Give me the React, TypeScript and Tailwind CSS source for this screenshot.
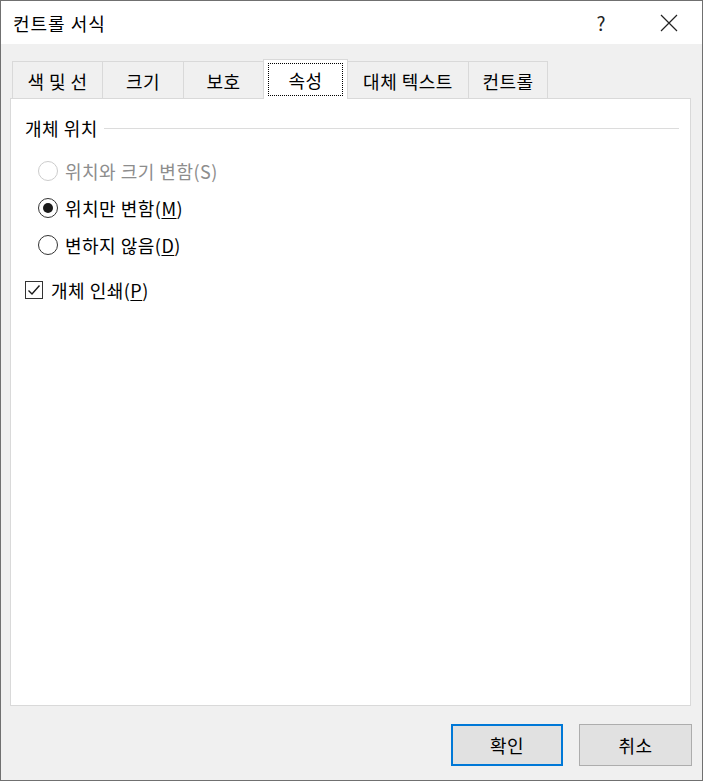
import React from "react"

const font = { fontFamily: '"Noto Sans CJK KR", "Noto Sans", sans-serif' }

const tabs = [
  { label: "색 및 선", w: "w-[91px]" },
  { label: "크기", w: "w-[82px]" },
  { label: "보호", w: "w-[81px]" },
  { label: "속성", w: "w-[85px]", active: true },
  { label: "대체 텍스트", w: "w-[122px]" },
  { label: "컨트롤", w: "w-[80px]" },
]

function Radio({ checked, disabled }: { checked?: boolean; disabled?: boolean }) {
  return (
    <span
      className={`w-[20px] h-[20px] rounded-full border flex items-center justify-center bg-white shrink-0 ${
        disabled ? "border-[#cccccc]" : "border-[#333333]"
      }`}
    >
      {checked && <span className="w-[10px] h-[10px] rounded-full bg-[#1a1a1a]" />}
    </span>
  )
}

function RadioRow({
  text,
  mn,
  checked,
  disabled,
}: {
  text: string
  mn: string
  checked?: boolean
  disabled?: boolean
}) {
  return (
    <div className={`h-[37px] flex items-center gap-[7px] pl-[13px] ${disabled ? "text-[#8d8d8d]" : "text-black"}`}>
      <Radio checked={checked} disabled={disabled} />
      <span className="text-[18px] tracking-[0.5px] leading-none whitespace-nowrap">
        {text}({disabled ? mn : <u className="underline-offset-2">{mn}</u>})
      </span>
    </div>
  )
}

export default function App() {
  return (
    <div
      style={font}
      className="w-[703px] h-[781px] border border-[#707070] bg-[#f0f0f0] flex flex-col text-black"
    >
      {/* title bar */}
      <div className="h-[43px] bg-white flex items-center shrink-0">
        <span className="pl-[12px] text-[18px] tracking-[1px] leading-none flex-1">컨트롤 서식</span>
        <span className="w-[30px] text-center text-[19px] leading-none mr-[44px] text-[#222]">?</span>
        <svg width="18" height="18" viewBox="0 0 18 18" className="mr-[24px]">
          <path d="M1 1 L17 17 M17 1 L1 17" stroke="#222" strokeWidth="1.2" fill="none" />
        </svg>
      </div>

      {/* tabs */}
      <div className="pt-[14px] px-[9px] flex flex-col flex-1">
        <div className="flex items-end pl-[2px] h-[40px]">
          {tabs.map((t) => (
            <div
              key={t.label}
              className={`${t.w} -ml-px first:ml-0 border border-b-0 border-[#d9d9d9] flex items-center justify-center text-[18px] tracking-[0.5px] leading-none ${
                t.active ? "h-[40px] bg-white relative z-10 -mb-px pb-[2px]" : "h-[37px] bg-[#f0f0f0]"
              }`}
            >
              {t.active ? (
                <span className="w-[75px] h-[33px] mt-[2px] border border-dotted border-black flex items-center justify-center">
                  {t.label}
                </span>
              ) : (
                <span className="pt-[1px]">{t.label}</span>
              )}
            </div>
          ))}
        </div>

        {/* panel */}
        <div className="w-[681px] h-[608px] bg-white border border-[#d9d9d9] pl-[14px] pr-[11px] pt-[17px]">
          <div className="h-[24px] flex items-center">
            <span className="text-[18px] tracking-[0.5px] leading-none whitespace-nowrap">개체 위치</span>
            <span className="flex-1 h-px bg-[#dcdcdc] ml-[6px]" />
          </div>
          <div className="mt-[12px]">
            <RadioRow text="위치와 크기 변함" mn="S" disabled />
            <RadioRow text="위치만 변함" mn="M" checked />
            <RadioRow text="변하지 않음" mn="D" />
          </div>
          <div className="mt-[15px] h-[24px] flex items-center gap-[8px]">
            <span className="w-[18px] h-[18px] border border-[#333333] bg-white flex items-center justify-center">
              <svg width="14" height="14" viewBox="0 0 14 14">
                <path d="M1.5 7.5 L5 11 L12.5 2.5" stroke="#1a1a1a" strokeWidth="1.4" fill="none" />
              </svg>
            </span>
            <span className="text-[18px] tracking-[0.5px] leading-none whitespace-nowrap">
              개체 인쇄(<u className="underline-offset-2">P</u>)
            </span>
          </div>
        </div>

        {/* buttons */}
        <div className="flex justify-end gap-[16px] mt-[18px] pr-[1px]">
          <button className="w-[112px] h-[42px] bg-[#e1e1e1] border-2 border-[#0078d7] text-[18px] tracking-[0.5px] leading-none">
            확인
          </button>
          <button className="w-[113px] h-[42px] bg-[#e1e1e1] border border-[#adadad] text-[18px] tracking-[0.5px] leading-none">
            취소
          </button>
        </div>
      </div>
    </div>
  )
}
